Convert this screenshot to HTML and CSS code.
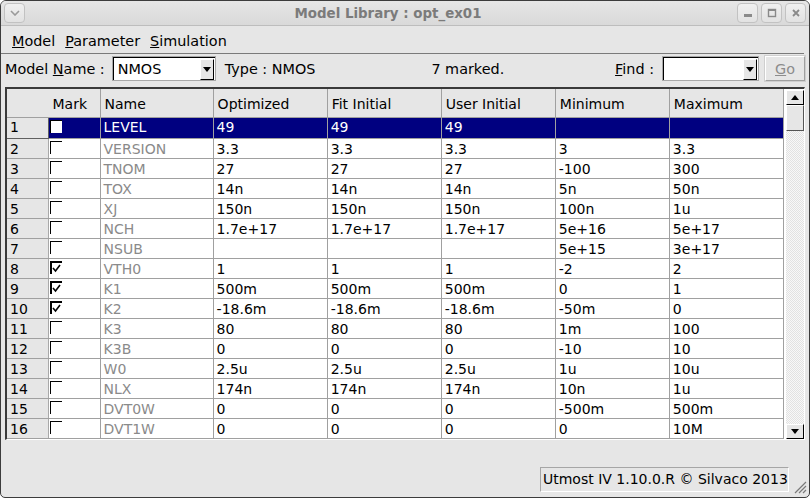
FILE: index.html
```html
<!DOCTYPE html>
<html>
<head>
<meta charset="utf-8">
<link rel="stylesheet" href="styles.css">
</head>
<body>
<div class="window">
  <div class="titlebar">
    <div class="tbtn menu-btn"><svg width="10" height="6" viewBox="0 0 10 6"><polyline points="1,1 5,5 9,1" fill="none" stroke="#9a9a9a" stroke-width="1.6"/></svg></div>
    <div class="title">Model Library : opt_ex01</div>
    <div class="tbtns">
      <div class="tbtn"><svg width="10" height="10" viewBox="0 0 10 10"><rect x="1" y="6" width="8" height="3" fill="#8a8a8a"/></svg></div>
      <div class="tbtn"><svg width="10" height="10" viewBox="0 0 10 10"><rect x="1.5" y="1.5" width="7" height="7" fill="none" stroke="#8a8a8a" stroke-width="1.4"/><rect x="1" y="1" width="8" height="2" fill="#8a8a8a"/></svg></div>
      <div class="tbtn"><svg width="10" height="10" viewBox="0 0 10 10"><path d="M2 2 L8 8 M8 2 L2 8" stroke="#8a8a8a" stroke-width="1.8"/></svg></div>
    </div>
  </div>
  <div class="menubar">
    <span class="mi"><u>M</u>odel</span>
    <span class="mi"><u>P</u>arameter</span>
    <span class="mi"><u>S</u>imulation</span>
  </div>
  <div class="toolbar">
    <span class="lbl">Model <u>N</u>ame :</span>
    <div class="combo combo-model"><span class="cval">NMOS</span><span class="carrow"><svg width="8" height="5" viewBox="0 0 8 5"><polygon points="0,0 8,0 4,5" fill="#000"/></svg></span></div>
    <span class="lbl type">Type : NMOS</span>
    <span class="lbl marked">7 marked.</span>
    <span class="lbl find"><u>F</u>ind :</span>
    <div class="combo combo-find"><span class="cval"></span><span class="carrow"><svg width="8" height="5" viewBox="0 0 8 5"><polygon points="0,0 8,0 4,5" fill="#000"/></svg></span></div>
    <div class="gobtn"><u>G</u>o</div>
  </div>
  <div class="tableframe">
    <div class="tablewrap">
      <table class="grid">
        <colgroup>
          <col class="c-rh"><col class="c-mark"><col class="c-name"><col class="c-v"><col class="c-v"><col class="c-v"><col class="c-v"><col class="c-v">
        </colgroup>
        <thead>
          <tr><th class="corner"></th><th>Mark</th><th>Name</th><th>Optimized</th><th>Fit Initial</th><th>User Initial</th><th>Minimum</th><th>Maximum</th></tr>
        </thead>
        <tbody>
          <tr class="sel"><td class="rh cur">1</td><td class="mk"><span class="cb"></span></td><td class="nm">LEVEL</td><td>49</td><td>49</td><td>49</td><td></td><td></td></tr>
          <tr><td class="rh">2</td><td class="mk"><span class="cb"></span></td><td class="nm">VERSION</td><td>3.3</td><td>3.3</td><td>3.3</td><td>3</td><td>3.3</td></tr>
          <tr><td class="rh">3</td><td class="mk"><span class="cb"></span></td><td class="nm">TNOM</td><td>27</td><td>27</td><td>27</td><td>-100</td><td>300</td></tr>
          <tr><td class="rh">4</td><td class="mk"><span class="cb"></span></td><td class="nm">TOX</td><td>14n</td><td>14n</td><td>14n</td><td>5n</td><td>50n</td></tr>
          <tr><td class="rh">5</td><td class="mk"><span class="cb"></span></td><td class="nm">XJ</td><td>150n</td><td>150n</td><td>150n</td><td>100n</td><td>1u</td></tr>
          <tr><td class="rh">6</td><td class="mk"><span class="cb"></span></td><td class="nm">NCH</td><td>1.7e+17</td><td>1.7e+17</td><td>1.7e+17</td><td>5e+16</td><td>5e+17</td></tr>
          <tr><td class="rh">7</td><td class="mk"><span class="cb"></span></td><td class="nm">NSUB</td><td></td><td></td><td></td><td>5e+15</td><td>3e+17</td></tr>
          <tr><td class="rh">8</td><td class="mk"><span class="cb on"><svg width="9" height="9" viewBox="0 0 9 9"><polyline points="1,4 3.5,7 8,1" fill="none" stroke="#000" stroke-width="1.6"/></svg></span></td><td class="nm">VTH0</td><td>1</td><td>1</td><td>1</td><td>-2</td><td>2</td></tr>
          <tr><td class="rh">9</td><td class="mk"><span class="cb on"><svg width="9" height="9" viewBox="0 0 9 9"><polyline points="1,4 3.5,7 8,1" fill="none" stroke="#000" stroke-width="1.6"/></svg></span></td><td class="nm">K1</td><td>500m</td><td>500m</td><td>500m</td><td>0</td><td>1</td></tr>
          <tr><td class="rh">10</td><td class="mk"><span class="cb on"><svg width="9" height="9" viewBox="0 0 9 9"><polyline points="1,4 3.5,7 8,1" fill="none" stroke="#000" stroke-width="1.6"/></svg></span></td><td class="nm">K2</td><td>-18.6m</td><td>-18.6m</td><td>-18.6m</td><td>-50m</td><td>0</td></tr>
          <tr><td class="rh">11</td><td class="mk"><span class="cb"></span></td><td class="nm">K3</td><td>80</td><td>80</td><td>80</td><td>1m</td><td>100</td></tr>
          <tr><td class="rh">12</td><td class="mk"><span class="cb"></span></td><td class="nm">K3B</td><td>0</td><td>0</td><td>0</td><td>-10</td><td>10</td></tr>
          <tr><td class="rh">13</td><td class="mk"><span class="cb"></span></td><td class="nm">W0</td><td>2.5u</td><td>2.5u</td><td>2.5u</td><td>1u</td><td>10u</td></tr>
          <tr><td class="rh">14</td><td class="mk"><span class="cb"></span></td><td class="nm">NLX</td><td>174n</td><td>174n</td><td>174n</td><td>10n</td><td>1u</td></tr>
          <tr><td class="rh">15</td><td class="mk"><span class="cb"></span></td><td class="nm">DVT0W</td><td>0</td><td>0</td><td>0</td><td>-500m</td><td>500m</td></tr>
          <tr><td class="rh">16</td><td class="mk"><span class="cb"></span></td><td class="nm">DVT1W</td><td>0</td><td>0</td><td>0</td><td>0</td><td>10M</td></tr>
        </tbody>
      </table>
    </div>
    <div class="vscroll">
      <div class="sbtn"><svg width="8" height="5" viewBox="0 0 8 5"><polygon points="0,5 8,5 4,0" fill="#000"/></svg></div>
      <div class="thumb"></div>
      <div class="trough"></div>
      <div class="sbtn"><svg width="8" height="5" viewBox="0 0 8 5"><polygon points="0,0 8,0 4,5" fill="#000"/></svg></div>
    </div>
  </div>
  <div class="bottom">
    <div class="status">Utmost IV 1.10.0.R © Silvaco 2013</div>
    <div class="grip"><svg width="14" height="14" viewBox="0 0 14 14"><path d="M13 2 L2 13 M13 6 L6 13 M13 10 L10 13" stroke="#7a7a7a" stroke-width="1.2"/></svg></div>
  </div>
</div>
</body>
</html>
```
FILE: styles.css
```css
* { box-sizing: border-box; }
html, body { margin: 0; padding: 0; background: #ffffff; }
body { font-family: "DejaVu Sans", sans-serif; font-size: 14px; color: #000; }
.window {
  width: 810px; height: 498px;
  background: #e6e6e6;
  border: 1px solid #3c3c3c;
  border-radius: 6px 6px 5px 5px;
  display: flex; flex-direction: column;
  overflow: hidden;
  position: relative;
}
.titlebar {
  height: 25px; flex: none;
  display: flex; align-items: center;
  padding: 0 3px 0 3px;
  background: linear-gradient(#e6e6e6, #d9d9d9);
  border-bottom: 1px solid #bdbdbd;
}
.title { flex: 1; text-align: center; font-weight: bold; color: #7b7b7b; font-size: 13.4px; padding-left: 14px; }
.tbtns { display: flex; gap: 3px; }
.tbtn {
  width: 21px; height: 20px;
  border: 1px solid #c2c2c2; border-radius: 4px;
  background: linear-gradient(#f0f0f0, #e2e2e2);
  display: flex; align-items: center; justify-content: center;
}
.menubar {
  height: 28px; flex: none;
  display: flex; align-items: center; gap: 10px;
  padding: 2px 0 0 11px;
  border-bottom: 1px solid #7a7a7a;
  margin-right: 5px;
  font-size: 14.4px;
}
.toolbar {
  height: 33px; flex: none;
  display: flex; align-items: center;
  padding: 0 4px 4px 4px;
  font-size: 14.4px;
}
.lbl { white-space: nowrap; }
.combo {
  height: 25px; background: #fff;
  border-top: 2px solid #000; border-left: 2px solid #000;
  border-right: 1px solid #fff; border-bottom: 1px solid #fff;
  outline: 1px solid #a8a8a8; outline-offset: -1px;
  display: flex; align-items: center;
}
.combo-model { width: 104px; margin-left: 7px; }
.combo-find { width: 97px; margin-left: 8px; }
.cval { flex: 1; padding-left: 4px; }
.carrow {
  width: 14px; height: 21px; margin-right: 1px;
  background: #e6e6e6;
  border-top: 1px solid #fff; border-left: 1px solid #fff;
  border-right: 1px solid #000; border-bottom: 1px solid #000;
  display: flex; align-items: center; justify-content: center;
}
.type { margin-left: 9px; }
.marked { margin-left: 116px; }
.find { margin-left: auto; }
.gobtn {
  width: 40px; height: 25px; margin-left: 6px;
  border-top: 1px solid #fff; border-left: 1px solid #fff;
  border-right: 1px solid #a0a0a0; border-bottom: 1px solid #a0a0a0;
  outline: 1px solid #cfcfcf;
  color: #8c8c8c;
  display: flex; align-items: center; justify-content: center;
}
.tableframe {
  margin: 0 4px 0 4px;
  height: 353px; flex: none;
  border-top: 2px solid #3a3a3a; border-left: 2px solid #3a3a3a;
  border-right: 1px solid #fff; border-bottom: 1px solid #fff;
  display: flex;
  background: #fff;
}
.tablewrap { width: 778px; overflow: hidden; background: #fff; }
.grid { border-collapse: collapse; table-layout: fixed; width: 777px; }
.c-rh { width: 41px; } .c-mark { width: 52px; } .c-name { width: 113px; } .c-v { width: 114px; }
.grid th {
  height: 28px; font-weight: normal; text-align: left;
  background: #e6e6e6; padding: 3px 4px 0 4px;
  border-right: 1px solid #a0a0a0; border-bottom: 1px solid #a0a0a0;
  border-top: 0;
}
.grid th.corner { border-right: 1px solid #e6e6e6; }
.grid td {
  height: 20px; padding: 1px 3px 0 3px; white-space: nowrap; overflow: hidden;
  border-right: 1px solid #a0a0a0; border-bottom: 1px solid #a0a0a0;
  line-height: 18px;
}
.grid tr.sel td { height: 21px; padding-top: 0; padding-bottom: 1px; }
.grid td.rh { background: #e6e6e6; padding-left: 3px; border-right: 1px solid #a8a8a8; }
.grid td.rh.cur { border-bottom: 1px solid #606060; border-right: 1px solid #606060; }
.grid td.nm { color: #8a8a8a; }
.grid td.mk { padding: 0 0 0 1px; vertical-align: top; }
.grid tr.sel td:not(.rh) { background: #000080; color: #fff; }
.cb {
  display: inline-flex; align-items: center; justify-content: center;
  width: 12px; height: 13px; margin-top: 2px;
  border-top: 1px solid #000; border-left: 1px solid #000;
  background: #fff; vertical-align: top;
}
.cb.on { border-top: 2px solid #000; border-left: 2px solid #000; }
.vscroll {
  width: 18px; margin-left: 2px; margin-top: 1px;
  display: flex; flex-direction: column;
}
.sbtn {
  height: 15px; flex: none;
  background: #e6e6e6;
  border-top: 1px solid #fff; border-left: 1px solid #fff;
  border-right: 1px solid #000; border-bottom: 1px solid #000;
  display: flex; align-items: center; justify-content: center;
}
.thumb {
  height: 26px; flex: none;
  background: #e6e6e6;
  border-top: 1px solid #fff; border-left: 1px solid #fff;
  border-right: 1px solid #555; border-bottom: 1px solid #555;
}
.trough {
  flex: 1;
  background-color: #f4f4f4;
  background-image: repeating-conic-gradient(#e2e2e2 0 25%, #f8f8f8 0 50%);
  background-size: 2px 2px;
}
.bottom {
  flex: 1;
  display: flex; align-items: flex-end; justify-content: flex-end;
  padding: 0 0 3px 0;
}
.status {
  height: 25px; width: 249px;
  border: 1px solid #a6a6a6;
  border-right-color: #fff; border-bottom-color: #fff;
  padding: 3px 0 0 2px; white-space: nowrap;
  margin-bottom: 2px;
}
.grip { width: 20px; height: 17px; display: flex; align-items: flex-end; justify-content: flex-end; padding-right: 2px; }
```
